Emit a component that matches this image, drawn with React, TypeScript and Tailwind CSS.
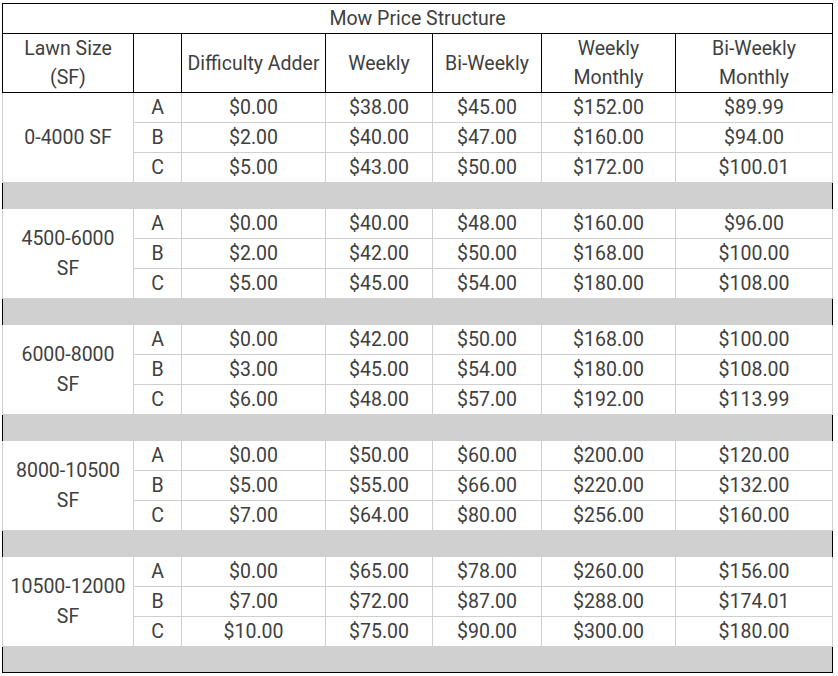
import React from "react"

type Group = {
  label: string[]
  rows: { tier: string; values: string[] }[]
}

const groups: Group[] = [
  {
    label: ["0-4000 SF"],
    rows: [
      { tier: "A", values: ["$0.00", "$38.00", "$45.00", "$152.00", "$89.99"] },
      { tier: "B", values: ["$2.00", "$40.00", "$47.00", "$160.00", "$94.00"] },
      { tier: "C", values: ["$5.00", "$43.00", "$50.00", "$172.00", "$100.01"] },
    ],
  },
  {
    label: ["4500-6000", "SF"],
    rows: [
      { tier: "A", values: ["$0.00", "$40.00", "$48.00", "$160.00", "$96.00"] },
      { tier: "B", values: ["$2.00", "$42.00", "$50.00", "$168.00", "$100.00"] },
      { tier: "C", values: ["$5.00", "$45.00", "$54.00", "$180.00", "$108.00"] },
    ],
  },
  {
    label: ["6000-8000", "SF"],
    rows: [
      { tier: "A", values: ["$0.00", "$42.00", "$50.00", "$168.00", "$100.00"] },
      { tier: "B", values: ["$3.00", "$45.00", "$54.00", "$180.00", "$108.00"] },
      { tier: "C", values: ["$6.00", "$48.00", "$57.00", "$192.00", "$113.99"] },
    ],
  },
  {
    label: ["8000-10500", "SF"],
    rows: [
      { tier: "A", values: ["$0.00", "$50.00", "$60.00", "$200.00", "$120.00"] },
      { tier: "B", values: ["$5.00", "$55.00", "$66.00", "$220.00", "$132.00"] },
      { tier: "C", values: ["$7.00", "$64.00", "$80.00", "$256.00", "$160.00"] },
    ],
  },
  {
    label: ["10500-12000", "SF"],
    rows: [
      { tier: "A", values: ["$0.00", "$65.00", "$78.00", "$260.00", "$156.00"] },
      { tier: "B", values: ["$7.00", "$72.00", "$87.00", "$288.00", "$174.01"] },
      { tier: "C", values: ["$10.00", "$75.00", "$90.00", "$300.00", "$180.00"] },
    ],
  },
]

const head = "border border-black text-center align-middle font-normal p-0"
const cell = "border border-[#cfcfcf] text-center align-middle p-0"

export default function App() {
  return (
    <div className="bg-white pt-[3px] pl-[2px] font-['Roboto',sans-serif] text-[19.5px] leading-[29px] text-[#404040]">
      <table className="table-fixed border-collapse border border-black w-[830px]">
        <colgroup>
          <col className="w-[131px]" />
          <col className="w-[48px]" />
          <col className="w-[144px]" />
          <col className="w-[107px]" />
          <col className="w-[109px]" />
          <col className="w-[134px]" />
          <col className="w-[157px]" />
        </colgroup>
        <thead>
          <tr className="h-[30px]">
            <th colSpan={7} className={head}>
              Mow Price Structure
            </th>
          </tr>
          <tr className="h-[59px]">
            <th className={head}>
              Lawn Size
              <br />
              (SF)
            </th>
            <th className={head}></th>
            <th className={head}>Difficulty Adder</th>
            <th className={head}>Weekly</th>
            <th className={head}>Bi-Weekly</th>
            <th className={head}>
              Weekly
              <br />
              Monthly
            </th>
            <th className={head}>
              Bi-Weekly
              <br />
              Monthly
            </th>
          </tr>
        </thead>
        <tbody>
          {groups.map((g) => (
            <React.Fragment key={g.label.join(" ")}>
              {g.rows.map((r, i) => (
                <tr key={r.tier} className="h-[30px]">
                  {i === 0 && (
                    <td rowSpan={3} className={cell + " leading-[30px]"}>
                      {g.label.map((l) => (
                        <div key={l}>{l}</div>
                      ))}
                    </td>
                  )}
                  <td className={cell}>{r.tier}</td>
                  {r.values.map((v, j) => (
                    <td key={j} className={cell}>
                      {v}
                    </td>
                  ))}
                </tr>
              ))}
              <tr className="h-[26px]">
                <td colSpan={7} className="bg-[#d0d0d0] p-0 border-x border-black"></td>
              </tr>
            </React.Fragment>
          ))}
        </tbody>
      </table>
    </div>
  )
}
